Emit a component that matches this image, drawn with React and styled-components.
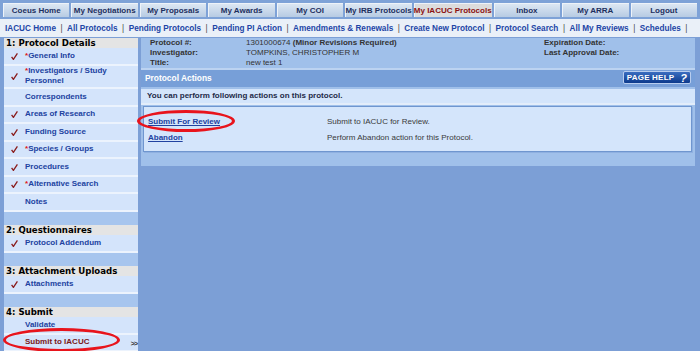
import styled, { createGlobalStyle } from "styled-components";

const GlobalStyle = createGlobalStyle`
  html, body {
    margin: 0;
    padding: 0;
    background: #7c9fd6;
  }
  body {
    font-family: "Liberation Sans", Arial, sans-serif;
    font-size: 8px;
    width: 700px;
    height: 351px;
    overflow: hidden;
  }
`;

// 상단 탭
const TabBar = styled.div`
  display: flex;
  gap: 2px;
  padding: 3px 3px 2px 3px;
  background: #7ea2d7;
`;

const Tab = styled.div`
  flex: 1;
  height: 14px;
  display: flex;
  align-items: center;
  justify-content: center;
  font-weight: bold;
  font-size: 8px;
  color: ${(p) => (p.$active ? "#8a1010" : "#1d2f5e")};
  background: ${(p) =>
    p.$active ? "#dcdcdc" : "linear-gradient(#dfe9f4, #b7cbe3)"};
  box-shadow: inset 1px 1px 0 #eef3f9;
  white-space: nowrap;
`;

// 서브 메뉴
const SubNav = styled.div`
  height: 18px;
  display: flex;
  align-items: center;
  padding-left: 5px;
  background: #eaf0f8;
  font-weight: bold;
  font-size: 8.2px;
  white-space: nowrap;
`;

const SubLink = styled.span`
  color: #2245a6;
`;

const Sep = styled.span`
  color: #444;
  margin: 0 4.5px;
  font-weight: normal;
`;

const Main = styled.div`
  display: flex;
  align-items: flex-start;
  gap: 3px;
  padding: 1px 5px 0 4px;
`;

// 왼쪽 사이드바
const Sidebar = styled.div`
  width: 134px;
  flex-shrink: 0;
  min-height: 313px;
  background: #a7c5ee;
`;

const Group = styled.div`
  margin-bottom: 13.5px;
`;

const GroupHeader = styled.div`
  height: 10px;
  line-height: 10px;
  padding-left: 2px;
  background: #e4e4e4;
  font-family: "DejaVu Sans", Verdana, sans-serif;
  font-weight: bold;
  font-size: 8.6px;
  color: #000;
`;

const NavRow = styled.div`
  position: relative;
  display: flex;
  align-items: center;
  min-height: ${(p) => (p.$tall ? "21.5px" : "15.5px")};
  padding: 0 0 0 21px;
  line-height: 10px;
  background: #d4e4fb;
  border-bottom: 2px solid #ecf3fd;
  font-weight: bold;
  font-size: 8px;
  color: ${(p) => (p.$current ? "#7a1818" : "#2142a0")};
`;

const Check = styled.svg`
  position: absolute;
  left: 7px;
  top: 50%;
  margin-top: -3px;
`;

const Star = styled.span`
  color: #e01515;
`;

const Arrows = styled.span`
  margin-left: auto;
  margin-right: 1px;
  margin-top: 4px;
  color: #333;
  font-size: 7px;
  letter-spacing: -1px;
`;

const Circle = styled.div`
  position: absolute;
  border: 3px solid #e8141c;
  border-radius: 50%;
  box-sizing: border-box;
  pointer-events: none;
`;

// 오른쪽 내용
const Content = styled.div`
  flex: 1;
  background: #a0c0ea;
  padding-bottom: 14px;
`;

const InfoBox = styled.div`
  display: grid;
  grid-template-columns: 96px 298px 1fr;
  padding: 0 0 0 9px;
  height: 30px;
  line-height: 10px;
  border-bottom: 2px solid #bcd3f1;
  font-size: 8px;
  color: #333;
`;

const Label = styled.div`
  font-weight: bold;
  color: #333;
`;

const ActionsBar = styled.div`
  height: 17px;
  display: flex;
  align-items: center;
  justify-content: space-between;
  padding: 0 4px 0 4px;
  background: #779fd8;
  color: #fff;
  font-weight: bold;
  font-size: 8.4px;
`;

const HelpButton = styled.div`
  height: 13px;
  width: 68px;
  box-sizing: border-box;
  display: flex;
  align-items: center;
  justify-content: center;
  gap: 6px;
  margin-top: -2px;
  border: 1px solid #b8cdee;
  border-radius: 2px;
  background: linear-gradient(#3a6dc0, #0c3a8c);
  color: #fff;
  font-weight: bold;
  font-size: 8px;
  letter-spacing: 0.2px;
`;

const Qmark = styled.span`
  font-size: 11px;
  font-style: italic;
  font-weight: 900;
`;

const Notice = styled.div`
  height: 14px;
  line-height: 14px;
  padding-left: 6px;
  margin-top: 2px;
  background: #d4e5fb;
  border-bottom: 2px solid #e3edfa;
  font-weight: bold;
  font-size: 8px;
  color: #1e2a48;
`;

const ActionsTable = styled.div`
  position: relative;
  margin: 1px 3px 0 2px;
  padding: 6px 0 6px 4px;
  background: #d4e5fb;
  border: 1px solid #6f96cf;
  box-shadow: 1px 1px 0 #8fb0e0;
`;

const ActionRow = styled.div`
  display: grid;
  grid-template-columns: 179px 1fr;
  height: 16px;
  align-items: center;
  font-size: 8px;
`;

const ActionLink = styled.a`
  color: #2142a0;
  font-weight: bold;
  text-decoration: underline;
`;

const ActionText = styled.span`
  color: #3a3a3a;
`;

const CheckMark = () => (
  <Check width="7" height="7" viewBox="0 0 7 7">
    <path d="M0.6 3.8 L2.4 6.4 L6.4 0.4" fill="none" stroke="#8a1c1c" strokeWidth="1.3" />
  </Check>
);

const tabs = [
  "Coeus Home",
  "My Negotiations",
  "My Proposals",
  "My Awards",
  "My COI",
  "My IRB Protocols",
  "My IACUC Protocols",
  "Inbox",
  "My ARRA",
  "Logout",
];

const subLinks = [
  "IACUC Home",
  "All Protocols",
  "Pending Protocols",
  "Pending PI Action",
  "Amendments & Renewals",
  "Create New Protocol",
  "Protocol Search",
  "All My Reviews",
  "Schedules",
];

const groups = [
  {
    title: "1: Protocol Details",
    items: [
      { label: "General Info", check: true, req: true },
      { label: "Investigators / Study Personnel", check: true, req: true, tall: true },
      { label: "Correspondents" },
      { label: "Areas of Research", check: true },
      { label: "Funding Source", check: true },
      { label: "Species / Groups", check: true, req: true },
      { label: "Procedures", check: true },
      { label: "Alternative Search", check: true, req: true },
      { label: "Notes" },
    ],
  },
  {
    title: "2: Questionnaires",
    items: [{ label: "Protocol Addendum", check: true }],
  },
  {
    title: "3: Attachment Uploads",
    items: [{ label: "Attachments", check: true }],
  },
];

const App = () => {
  return (
    <>
      <GlobalStyle />
      <TabBar>
        {tabs.map((t) => (
          <Tab key={t} $active={t === "My IACUC Protocols"}>
            {t}
          </Tab>
        ))}
      </TabBar>
      <SubNav>
        {subLinks.map((l) => (
          <span key={l}>
            <SubLink>{l}</SubLink>
            <Sep>|</Sep>
          </span>
        ))}
      </SubNav>
      <Main>
        <Sidebar>
          {groups.map((g) => (
            <Group key={g.title}>
              <GroupHeader>{g.title}</GroupHeader>
              {g.items.map((item) => (
                <NavRow key={item.label} $tall={item.tall}>
                  {item.check && <CheckMark />}
                  <span>
                    {item.req && <Star>*</Star>}
                    {item.label}
                  </span>
                </NavRow>
              ))}
            </Group>
          ))}
          <div>
            <GroupHeader>4: Submit</GroupHeader>
            <NavRow>Validate</NavRow>
            <NavRow $current>
              <span>Submit to IACUC</span>
              <Arrows>&gt;&gt;</Arrows>
              <Circle style={{ left: -1, top: -7, width: 117, height: 24 }} />
            </NavRow>
          </div>
        </Sidebar>
        <Content>
          <InfoBox>
            <Label>Protocol #:</Label>
            <div>
              1301000674 <Label as="span">(Minor Revisions Required)</Label>
            </div>
            <Label>Expiration Date:</Label>
            <Label>Investigator:</Label>
            <div>TOMPKINS, CHRISTOPHER M</div>
            <Label>Last Approval Date:</Label>
            <Label>Title:</Label>
            <div>new test 1</div>
            <div />
          </InfoBox>
          <ActionsBar>
            <span style={{ marginTop: -2 }}>Protocol Actions</span>
            <HelpButton>
              PAGE HELP <Qmark>?</Qmark>
            </HelpButton>
          </ActionsBar>
          <Notice>You can perform following actions on this protocol.</Notice>
          <ActionsTable>
            <ActionRow>
              <ActionLink>Submit For Review</ActionLink>
              <ActionText>Submit to IACUC for Review.</ActionText>
            </ActionRow>
            <ActionRow>
              <ActionLink>Abandon</ActionLink>
              <ActionText>Perform Abandon action for this Protocol.</ActionText>
            </ActionRow>
            <Circle style={{ left: -7, top: 3, width: 98, height: 22 }} />
          </ActionsTable>
        </Content>
      </Main>
    </>
  );
};

export default App;
